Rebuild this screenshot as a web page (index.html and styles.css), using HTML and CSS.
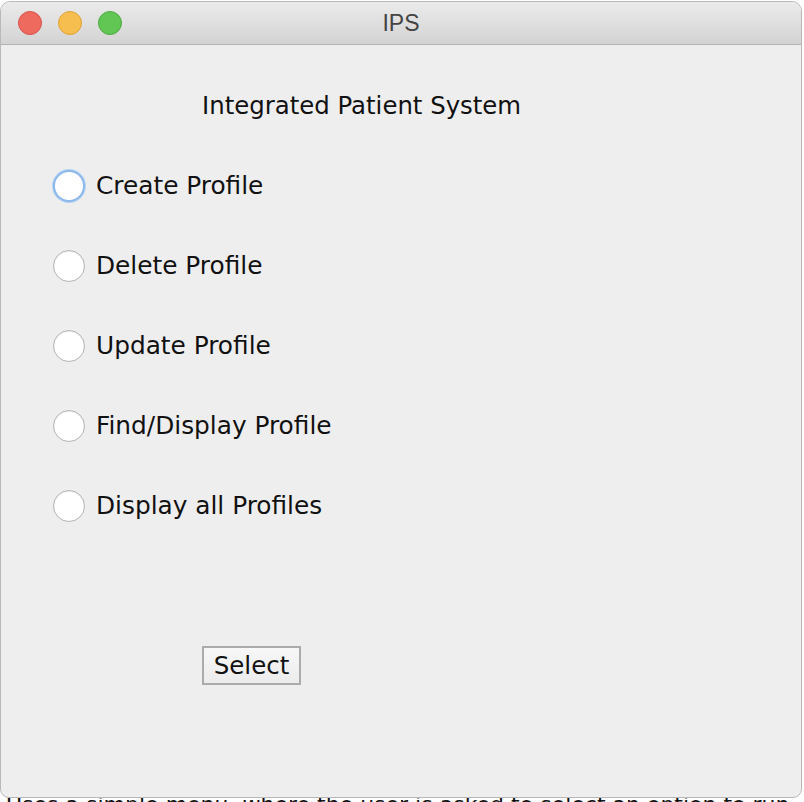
FILE: index.html
```html
<!DOCTYPE html>
<html>
<head>
<meta charset="utf-8">
<link rel="stylesheet" href="styles.css">
</head>
<body>
<div class="window">
  <div class="titlebar">
    <div class="lights">
      <span class="light red"></span>
      <span class="light yellow"></span>
      <span class="light green"></span>
    </div>
    <div class="title">IPS</div>
  </div>
  <div class="content">
    <div class="heading">Integrated Patient System</div>
    <div class="options">
      <label class="option"><span class="radio focused"></span><span class="label">Create Profile</span></label>
      <label class="option"><span class="radio"></span><span class="label">Delete Profile</span></label>
      <label class="option"><span class="radio"></span><span class="label">Update Profile</span></label>
      <label class="option"><span class="radio"></span><span class="label">Find/Display Profile</span></label>
      <label class="option"><span class="radio"></span><span class="label">Display all Profiles</span></label>
    </div>
    <div class="actions">
      <button class="btn">Select</button>
    </div>
  </div>
</div>
<div class="under">Uses a simple menu, where the user is asked to select an option to run</div>
</body>
</html>
```
FILE: styles.css
```css
html, body {
  margin: 0;
  padding: 0;
  background: #ffffff;
  width: 804px;
  height: 802px;
  overflow: hidden;
}
body {
  font-family: "DejaVu Sans", "Liberation Sans", sans-serif;
  position: relative;
}
.window {
  width: 800px;
  height: 795px;
  margin-left: 0;
  margin-top: 1px;
  border: 1px solid #b9b9b9;
  border-radius: 10px 10px 9px 9px;
  background: #eeeeee;
  overflow: hidden;
  display: flex;
  flex-direction: column;
  position: relative;
  z-index: 1;
}
.titlebar {
  height: 42px;
  flex: none;
  background: linear-gradient(#ebebeb, #d3d3d3);
  border-bottom: 1px solid #b3b3b3;
  position: relative;
  display: flex;
  align-items: center;
  justify-content: center;
}
.lights {
  position: absolute;
  left: 17px;
  top: 9px;
  display: flex;
  gap: 16px;
}
.light {
  width: 24px;
  height: 24px;
  border-radius: 50%;
  box-sizing: border-box;
}
.red { background: #ee6a5f; border: 1px solid #d6534a; }
.yellow { background: #f6be4f; border: 1px solid #dea236; }
.green { background: #62c655; border: 1px solid #4caa3f; }
.title {
  font-family: "Liberation Sans", "DejaVu Sans", sans-serif;
  font-size: 23px;
  color: #444;
  margin-top: 1px;
}
.content {
  flex: 1;
  display: flex;
  flex-direction: column;
  padding-top: 41px;
}
.heading {
  height: 40px;
  line-height: 40px;
  font-size: 24.4px;
  color: #111;
  padding-left: 201px;
}
.options {
  display: flex;
  flex-direction: column;
  margin-top: 20px;
  padding-left: 52px;
}
.option {
  height: 80px;
  display: flex;
  align-items: center;
  gap: 11px;
}
.radio {
  width: 32px;
  height: 32px;
  box-sizing: border-box;
  border-radius: 50%;
  background: #ffffff;
  border: 1px solid #b4b4b4;
  box-shadow: inset 0 1px 1px rgba(0,0,0,0.08);
  flex: none;
}
.radio.focused {
  border: 2px solid #8db8ea;
  box-shadow: 0 0 0 1px #b5d3f5;
}
.label {
  font-size: 24.8px;
  color: #111;
  line-height: 30px;
}
.actions {
  margin-top: 100px;
  padding-left: 201px;
}
.btn {
  width: 99px;
  height: 39px;
  box-sizing: border-box;
  border: 2px solid #ababab;
  background: linear-gradient(#f7f7f7, #ececec);
  font-family: "DejaVu Sans", sans-serif;
  font-size: 24.5px;
  color: #111;
  padding: 0;
  border-radius: 0;
}
.under {
  position: absolute;
  left: 6px;
  top: 792px;
  font-family: "DejaVu Sans", sans-serif;
  font-size: 22px;
  color: #111;
  white-space: nowrap;
  z-index: 0;
}
```
